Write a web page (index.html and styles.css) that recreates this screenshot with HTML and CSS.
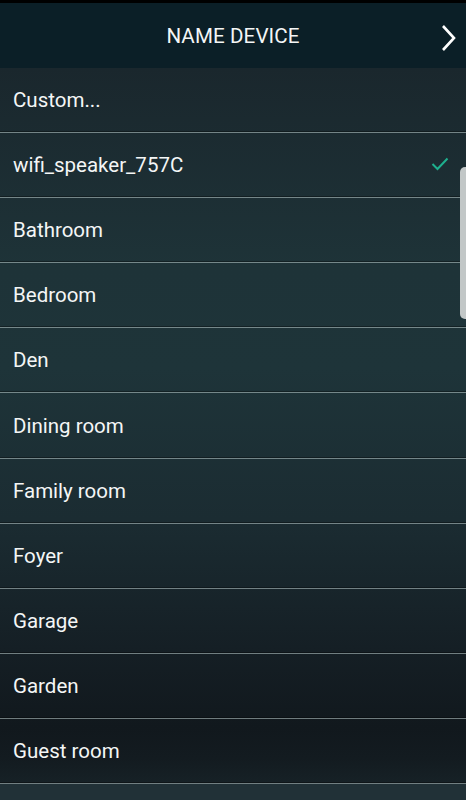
FILE: index.html
```html
<!DOCTYPE html>
<html lang="en">
<head>
    <meta charset="UTF-8">
    <meta name="viewport" content="width=device-width, initial-scale=1.0">
    <title>Name Device</title>
    <link rel="stylesheet" href="styles.css">
</head>
<body>
    <div class="status"></div>
    <div class="header">
        <h1>NAME DEVICE</h1>
        <svg class="next" width="16" height="28" viewBox="0 0 16 28">
            <path d="M2 2 L13 14 L2 26" fill="none" stroke="#fff" stroke-width="2.6"/>
        </svg>
    </div>

    <div class="list">
        <div class="row">Custom...</div>
        <div class="row selected">
            <span>wifi_speaker_757C</span>
            <svg class="check" width="18" height="14" viewBox="0 0 18 14">
                <path d="M1.5 7 L6.5 12 L16.5 1.5" fill="none" stroke="#1eb08e" stroke-width="2"/>
            </svg>
        </div>
        <div class="row">Bathroom</div>
        <div class="row">Bedroom</div>
        <div class="row">Den</div>
        <div class="row">Dining room</div>
        <div class="row">Family room</div>
        <div class="row">Foyer</div>
        <div class="row">Garage</div>
        <div class="row">Garden</div>
        <div class="row">Guest room</div>
        <div class="scrollbar"></div>
    </div>
</body>
</html>
```

FILE: styles.css
```css
body {
    margin: 0;
    width: 466px;
    height: 800px;
    overflow: hidden;
    font-family: Roboto, "Noto Sans", sans-serif;
    color: #f4f6f6;
    background-color: #213137;
}

.status {
    height: 3px;
    background-color: #000;
}

.header {
    height: 65px;
    background-color: #0b1f27;
    display: flex;
    align-items: center;
    justify-content: center;
    position: relative;
}

.header h1 {
    margin: 0;
    font-size: 20.6px;
    font-weight: 400;
    letter-spacing: 0.1px;
}

.next {
    position: absolute;
    right: 9px;
    top: 21px;
}

.list {
    position: relative;
    background: linear-gradient(180deg,
        #1a272d 0px,
        #1e3338 200px,
        #1e3439 300px,
        #1b2c32 450px,
        #151f25 580px,
        #11181d 660px,
        #131b20 690px,
        #1b2a2f 750px,
        #213137 800px);
}

.row {
    height: 64.1px;
    border-bottom: 1px solid rgba(190, 205, 205, 0.55);
    box-shadow: 0 -1px 0 rgba(0, 0, 0, 0.35) inset;
    display: flex;
    align-items: center;
    justify-content: space-between;
    padding: 0 17px 0 13px;
    font-size: 20.5px;
}

.selected .check {
    margin-top: -2px;
}

.scrollbar {
    position: absolute;
    right: 0;
    top: 99px;
    width: 6px;
    height: 152px;
    background-color: #c2c7c7;
    border-radius: 5px 0 0 5px;
}
```
